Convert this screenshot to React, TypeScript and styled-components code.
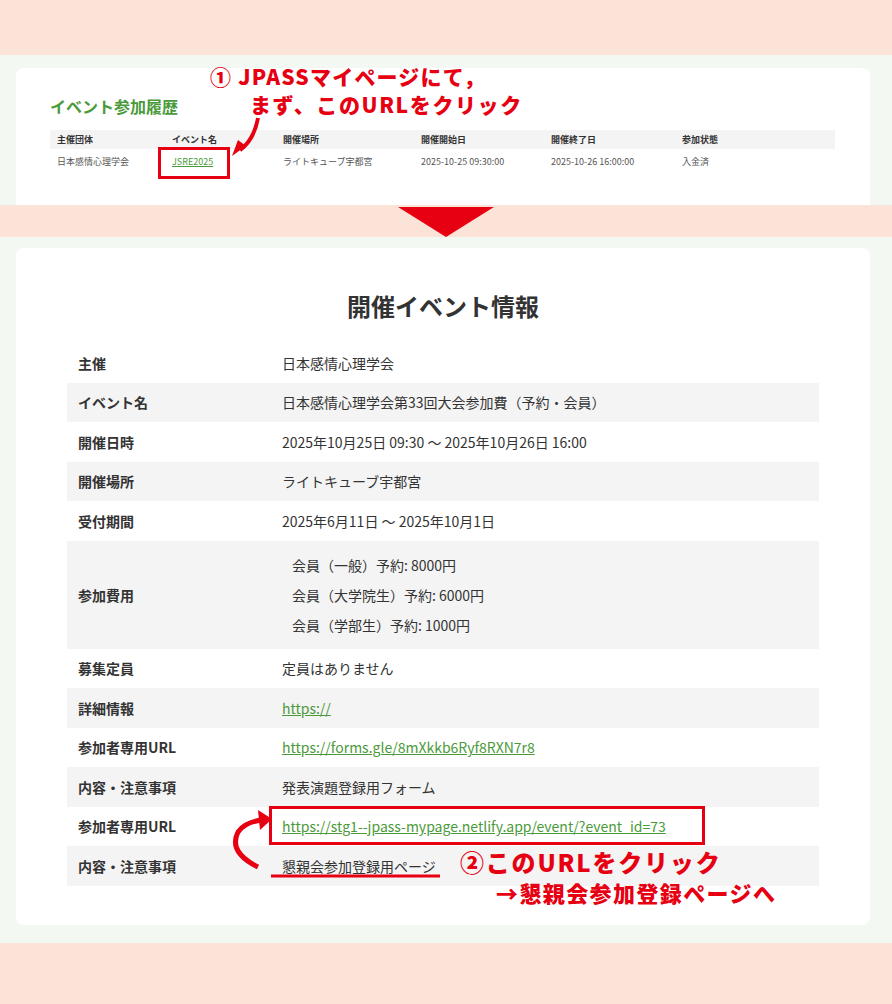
import React from "react";
import styled, { createGlobalStyle } from "styled-components";

const G = createGlobalStyle`
  body{margin:0;font-family:"Noto Sans CJK JP","Noto Sans",sans-serif;color:#333;}
`;
const Page = styled.div`width:892px;height:1004px;display:flex;flex-direction:column;background:#fce3d8;position:relative;overflow:hidden;`;
const Peach = styled.div<{h:number}>`height:${p=>p.h}px;background:#fce3d8;flex-shrink:0;display:flex;justify-content:center;`;
const Green = styled.div<{h:number;pt:number}>`height:${p=>p.h}px;background:#f4f8f2;padding:${p=>p.pt}px 22px 0 16px;box-sizing:border-box;overflow:hidden;flex-shrink:0;`;
const Card = styled.div<{h:number}>`background:#fff;border-radius:8px;height:${p=>p.h}px;box-sizing:border-box;`;
const TopCard = styled(Card)`padding:28px 35px 0 34px;`;
const GreenTitle = styled.div`color:#4a9a3a;font-weight:700;font-size:16px;line-height:20px;height:34px;`;
const MiniGrid = styled.div`display:grid;grid-template-columns:115px 111px 138px 130px 131px 1fr;font-size:9px;`;
const MiniHead = styled.div`background:#f4f4f4;height:19px;line-height:19px;font-weight:700;padding-left:7px;`;
const MiniCell = styled.div`height:25px;line-height:25px;padding-left:7px;color:#555;`;
const Link = styled.a`color:#4a9a3a;text-decoration:underline;`;
const Tri = styled.div`width:0;height:0;border-left:48px solid transparent;border-right:48px solid transparent;border-top:30px solid #e60012;margin-top:2px;`;
const MainCard = styled(Card)`padding:40px 51px 0 51px;`;
const Title = styled.h1`margin:0;text-align:center;font-size:24px;font-weight:700;color:#333;line-height:36px;height:55px;`;
const Row = styled.div<{alt:boolean;h?:number}>`display:flex;align-items:center;height:${p=>p.h??39.5}px;background:${p=>p.alt?"#f4f4f4":"#fff"};font-size:14px;`;
const Label = styled.div`width:215px;padding-left:11px;font-weight:700;box-sizing:border-box;flex-shrink:0;`;
const Value = styled.div`color:#333;`;
const Fees = styled.div`display:flex;flex-direction:column;gap:10px;padding-left:10px;`;
const Anno = styled.div<{x:number;y:number;s:number;ls:number}>`position:absolute;left:${p=>p.x}px;top:${p=>p.y}px;font-size:${p=>p.s}px;letter-spacing:${p=>p.ls}px;font-weight:900;color:#e60012;line-height:1.2;white-space:nowrap;font-family:"Noto Sans CJK JP",sans-serif;`;
const RedBox = styled.div<{x:number;y:number;w:number;h:number}>`position:absolute;left:${p=>p.x}px;top:${p=>p.y}px;width:${p=>p.w}px;height:${p=>p.h}px;border:3px solid #e60012;box-sizing:border-box;`;
const Svg = styled.svg`position:absolute;left:0;top:0;pointer-events:none;`;

const rows: [string, React.ReactNode][] = [
  ["主催","日本感情心理学会"],
  ["イベント名","日本感情心理学会第33回大会参加費（予約・会員）"],
  ["開催日時","2025年10月25日 09:30 〜 2025年10月26日 16:00"],
  ["開催場所","ライトキューブ宇都宮"],
  ["受付期間","2025年6月11日 〜 2025年10月1日"],
];
const rows2: [string, React.ReactNode][] = [
  ["募集定員","定員はありません"],
  ["詳細情報",<Link>https://</Link>],
  ["参加者専用URL",<Link>https://forms.gle/8mXkkb6Ryf8RXN7r8</Link>],
  ["内容・注意事項","発表演題登録用フォーム"],
  ["参加者専用URL",<Link>https://stg1--jpass-mypage.netlify.app/event/?event_id=73</Link>],
  ["内容・注意事項","懇親会参加登録用ページ"],
];

export default function App(){
  return (<Page><G/>
    <Peach h={55}/>
    <Green h={150} pt={13}>
      <TopCard h={150}>
        <GreenTitle>イベント参加履歴</GreenTitle>
        <MiniGrid>
          {["主催団体","イベント名","開催場所","開催開始日","開催終了日","参加状態"].map(t=><MiniHead key={t}>{t}</MiniHead>)}
          <MiniCell>日本感情心理学会</MiniCell>
          <MiniCell><Link>JSRE2025</Link></MiniCell>
          <MiniCell>ライトキューブ宇都宮</MiniCell>
          <MiniCell>2025-10-25 09:30:00</MiniCell>
          <MiniCell>2025-10-26 16:00:00</MiniCell>
          <MiniCell>入金済</MiniCell>
        </MiniGrid>
      </TopCard>
    </Green>
    <Peach h={32}><Tri/></Peach>
    <Green h={706} pt={11}>
      <MainCard h={677}>
        <Title>開催イベント情報</Title>
        {rows.map(([l,v],i)=><Row key={i} alt={i%2===1}><Label>{l}</Label><Value>{v}</Value></Row>)}
        <Row alt h={108}><Label>参加費用</Label><Fees><span>会員（一般）予約: 8000円</span><span>会員（大学院生）予約: 6000円</span><span>会員（学部生）予約: 1000円</span></Fees></Row>
        {rows2.map(([l,v],i)=><Row key={i} alt={i%2===1}><Label>{l}</Label><Value>{v}</Value></Row>)}
      </MainCard>
    </Green>
    <Anno x={210} y={64} s={21} ls={1.2}>① JPASSマイページにて，</Anno>
    <Anno x={250} y={92} s={21} ls={1.6}>まず、このURLをクリック</Anno>
    <RedBox x={158} y={147} w={72} h={32}/>
    <RedBox x={269} y={806} w={436} h={39}/>
    <Anno x={460} y={848} s={24} ls={1.8}>②このURLをクリック</Anno>
    <Anno x={496} y={879} s={22} ls={1.4}>→懇親会参加登録ページへ</Anno>
    <Svg width={892} height={1004}>
      <path d="M258 118 Q254 140 240 150" stroke="#e60012" strokeWidth={4} fill="none"/>
      <polygon points="232,156 246,146 238,140" fill="#e60012"/>
      <line x1={271} y1={876} x2={440} y2={876} stroke="#e60012" strokeWidth={3}/>
      <path d="M258 867 Q228 852 238 832 Q245 822 262 820" stroke="#e60012" strokeWidth={5} fill="none"/>
      <polygon points="272,819 258,810 260,830" fill="#e60012"/>
    </Svg>
  </Page>);
}
